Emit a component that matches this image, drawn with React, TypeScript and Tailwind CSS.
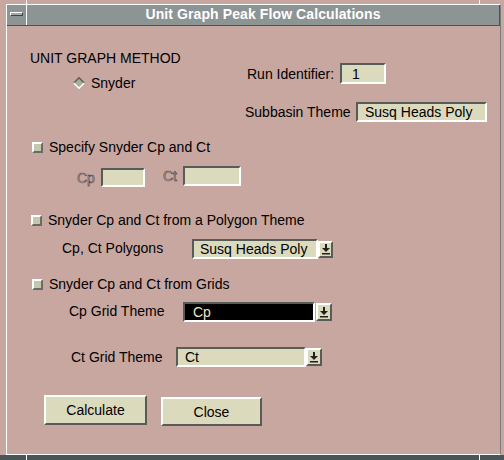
import React from "react";

const inset = "border-2 border-t-[#585c58] border-l-[#585c58] border-b-white border-r-white";
const raised = "border-2 border-t-white border-l-white border-b-[#585c58] border-r-[#585c58]";
const cream = "bg-[#dcdabc]";

function ArrowBtn({ w, h }: { w: string; h: string }) {
  return (
    <div className={`${w} ${h} ${cream} ${raised} flex items-center justify-center`}>
      <svg width="8" height="11" viewBox="0 0 8 11">
        <rect x="3" y="0" width="2" height="4" fill="#202020" />
        <polygon points="0,4 8,4 4,8" fill="#202020" />
        <rect x="0" y="9" width="8" height="1.5" fill="#202020" />
      </svg>
    </div>
  );
}

function Check() {
  return (
    <div className="w-[11px] h-[11px] bg-[#c4c6ae] border-2 border-t-white border-l-white border-b-[#6a6c64] border-r-[#6a6c64]" />
  );
}

function Diamond() {
  return (
    <svg width="12" height="12" viewBox="0 0 12 12">
      <polygon points="6,0.5 11.5,6 6,11.5 0.5,6" fill="#a8ae9c" />
      <polyline points="0.8,6 6,0.8 11.2,6" fill="none" stroke="#5c6050" strokeWidth="1.5" />
      <polyline points="0.8,6 6,11.2 11.2,6" fill="none" stroke="#ffffff" strokeWidth="1.5" />
    </svg>
  );
}

const disabledLabel = "text-transparent [-webkit-text-stroke:0.45px_#2a2222]";

export default function App() {
  return (
    <div
      className="w-[504px] h-[460px] bg-[#c8a7a0] flex flex-col overflow-hidden text-[14px] leading-[16px] text-black"
      style={{ fontFamily: '"Liberation Sans", Arial, sans-serif' }}
    >
      <div className="h-[4px] flex shrink-0">
        <div className="w-[26px]" />
        <div className="w-[1px] bg-white" />
        <div className="w-[452px]" />
        <div className="w-[1px] bg-white" />
      </div>
      <div className="flex-1 pl-[6px] pr-[3px] flex">
        <div className="flex-1 flex flex-col border-t border-l border-b border-white border-r border-r-[#7a7c7c]">
          {/* title row */}
          <div className="h-[21px] flex shrink-0 border-b border-[#4c5050]">
            <div className="w-[19px] bg-[#8c9494] pt-[7px] pl-[3px]">
              <div className="w-[13px] h-[4px] bg-[#a0a8a8] border border-t-white border-l-white border-b-[#404444] border-r-[#404444]" />
            </div>
            <div className="w-[1px] bg-white" />
            <div className="flex-1 bg-[#8c9494] border-r border-[#4c5050] flex justify-center pt-[1px]">
              <span className="font-bold text-white tracking-[0.1px]">Unit Graph Peak Flow Calculations</span>
            </div>
          </div>

          {/* body */}
          <div className="flex-1 flex flex-col">
            {/* top section */}
            <div className="mt-[24px] flex">
              <div className="ml-[23px] w-[215px] flex flex-col">
                <div className="h-[16px]">UNIT GRAPH METHOD</div>
                <div className="mt-[9px] h-[16px] flex items-center pl-[43px]">
                  <Diamond />
                  <span className="ml-[6px]">Snyder</span>
                </div>
              </div>
              <div className="mt-[13px] flex flex-col">
                <div className="flex items-center pl-[2px]">
                  <span className="w-[93px]">Run Identifier:</span>
                  <div className={`w-[46px] h-[21px] ${cream} ${inset} pl-[10px] flex items-center`}>1</div>
                </div>
                <div className="mt-[18px] flex items-center">
                  <span className="w-[111px]">Subbasin Theme</span>
                  <div className={`w-[131px] h-[20px] ${cream} ${inset} pl-[7px] flex items-center`}>Susq Heads Poly</div>
                </div>
              </div>
            </div>

            {/* specify */}
            <div className="mt-[17px] ml-[25px] h-[16px] flex items-center">
              <Check />
              <span className="ml-[6px]">Specify Snyder Cp and Ct</span>
            </div>
            <div className="mt-[11px] ml-[70px] flex items-start">
              <div className="mt-[2px] flex items-center">
                <span className={`w-[24px] ${disabledLabel}`}>Cp</span>
                <div className={`w-[44px] h-[19px] ${cream} ${inset}`} />
              </div>
              <div className="ml-[18px] flex items-center">
                <span className={`w-[20px] ${disabledLabel}`}>Ct</span>
                <div className={`w-[58px] h-[20px] ${cream} ${inset}`} />
              </div>
            </div>

            {/* polygon */}
            <div className="mt-[25px] ml-[24px] h-[16px] flex items-center">
              <Check />
              <span className="ml-[6px]">Snyder Cp and Ct from a Polygon Theme</span>
            </div>
            <div className="mt-[11px] ml-[55px] flex items-center">
              <span className="w-[130px] mb-[2px]">Cp, Ct Polygons</span>
              <div className={`w-[126px] h-[20px] ${cream} ${inset} pl-[6px] flex items-center`}>Susq Heads Poly</div>
              <ArrowBtn w="w-[15px]" h="h-[17px]" />
            </div>

            {/* grids */}
            <div className="mt-[17px] ml-[25px] h-[16px] flex items-center">
              <Check />
              <span className="ml-[6px]">Snyder Cp and Ct from Grids</span>
            </div>
            <div className="mt-[10px] ml-[62px] flex items-center">
              <span className="w-[114px] mb-[3px]">Cp Grid Theme</span>
              <div className={`w-[132px] h-[20px] bg-black ${inset} pl-[8px] flex items-center text-[#ece4c4]`}>Cp</div>
              <div className="ml-[1px]">
                <ArrowBtn w="w-[16px]" h="h-[18px]" />
              </div>
            </div>
            <div className="mt-[25px] ml-[64px] flex items-center">
              <span className="w-[105px]">Ct Grid Theme</span>
              <div className={`w-[130px] h-[20px] ${cream} ${inset} pl-[7px] flex items-center`}>Ct</div>
              <ArrowBtn w="w-[16px]" h="h-[18px]" />
            </div>

            {/* buttons */}
            <div className="mt-[28px] ml-[37px] flex items-start">
              <div className={`w-[103px] h-[30px] ${cream} ${raised} flex items-center justify-center`}>Calculate</div>
              <div className={`ml-[14px] mt-[2px] w-[101px] h-[29px] ${cream} ${raised} flex items-center justify-center`}>Close</div>
            </div>
          </div>
        </div>
      </div>
      <div className="h-[5px] shrink-0 bg-[#4c5458] flex">
        <div className="w-[26px]" />
        <div className="w-[1px] bg-white" />
        <div className="w-[452px]" />
        <div className="w-[1px] bg-white" />
      </div>
    </div>
  );
}
